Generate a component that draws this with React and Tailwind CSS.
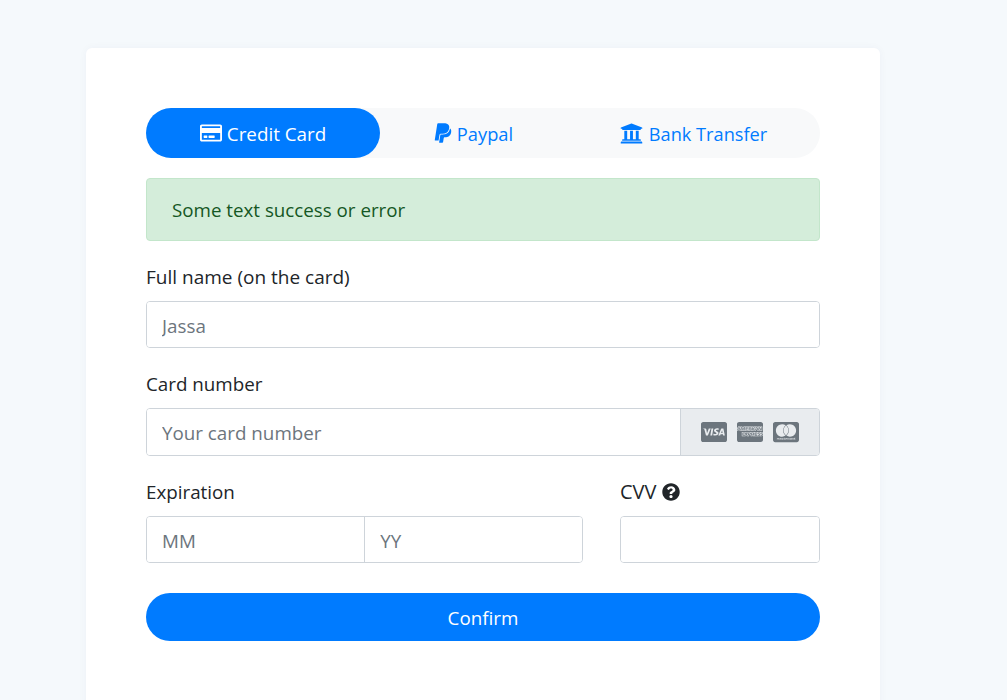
import React from 'react';
import {
  FaRegCreditCard,
  FaPaypal,
  FaUniversity,
  FaQuestionCircle,
  FaCcVisa,
  FaCcAmex,
  FaCcMastercard,
} from 'react-icons/fa';

const inputClass =
  'w-full min-w-0 h-full bg-white px-[15px] pt-[2px] text-[#495057] placeholder:text-[#6c757d] outline-none';

const App = () => {
  return (
    <div className="h-[700px] overflow-hidden bg-[#f5f9fc] pt-12 pl-[86px] font-['Open_Sans',sans-serif] text-[18.8px] text-[#212529]">
      <div className="w-[794px] h-[700px] rounded-md bg-white p-[60px] shadow-[0_0_8px_rgba(0,40,100,0.04)]">
        <div className="flex h-[50px] rounded-[25px] bg-[#f8f9fa] text-[#007bff]">
          <div className="flex w-[234px] items-center justify-center gap-[5px] rounded-[25px] bg-[#007bff] text-white">
            <FaRegCreditCard className="text-[22px]" />
            <span className="pt-[2px] text-[18.8px]">Credit Card</span>
          </div>
          <div className="flex w-[187px] items-center justify-center gap-[3px] pr-[2px]">
            <FaPaypal className="text-[22px]" />
            <span className="pt-px text-[18.3px]">Paypal</span>
          </div>
          <div className="flex flex-1 items-center justify-center gap-[6px]">
            <FaUniversity className="text-[23px]" />
            <span className="pt-[4px] text-[18.2px]">Bank Transfer</span>
          </div>
        </div>

        <div className="mt-5 flex h-[63px] items-center rounded-[4px] border border-[#c3e6cb] bg-[#d4edda] pt-px pl-[25px] text-[18.75px] text-[#155724]">
          Some text success or error
        </div>

        <label className="mt-[23px] block h-[37px] text-[19px] leading-[27px]">Full name (on the card)</label>
        <div className="h-[47px] overflow-hidden rounded-[4px] border border-[#ced4da]">
          <input className={inputClass} placeholder="Jassa" />
        </div>

        <label className="mt-[23px] block h-[37px] leading-[27px]">Card number</label>
        <div className="flex h-[48px] overflow-hidden rounded-[4px] border border-[#ced4da]">
          <input className={inputClass} placeholder="Your card number" />
          <div className="flex w-[139px] shrink-0 items-center justify-center gap-[10px] border-l border-[#ced4da] bg-[#e9ecef] text-[26px] text-[#6c757d]">
            <FaCcVisa />
            <FaCcAmex />
            <FaCcMastercard />
          </div>
        </div>

        <div className="mt-[23px] flex gap-[37px]">
          <div className="w-[437px]">
            <label className="block h-[37px] leading-[27px]">Expiration</label>
            <div className="flex h-[47px] overflow-hidden rounded-[4px] border border-[#ced4da]">
              <input className={inputClass} placeholder="MM" />
              <input className={`${inputClass} border-l border-[#ced4da]`} placeholder="YY" />
            </div>
          </div>
          <div className="flex-1">
            <label className="flex h-[37px] items-start gap-[6px] text-[20px] leading-[25px]">
              CVV
              <FaQuestionCircle className="mt-[4px] text-[18px]" />
            </label>
            <div className="h-[47px] overflow-hidden rounded-[4px] border border-[#ced4da]">
              <input className={inputClass} />
            </div>
          </div>
        </div>

        <button className="mt-[30px] h-[48px] w-full rounded-[24px] bg-[#007bff] pt-[3px] text-white">Confirm</button>
      </div>
    </div>
  );
};

export default App;
